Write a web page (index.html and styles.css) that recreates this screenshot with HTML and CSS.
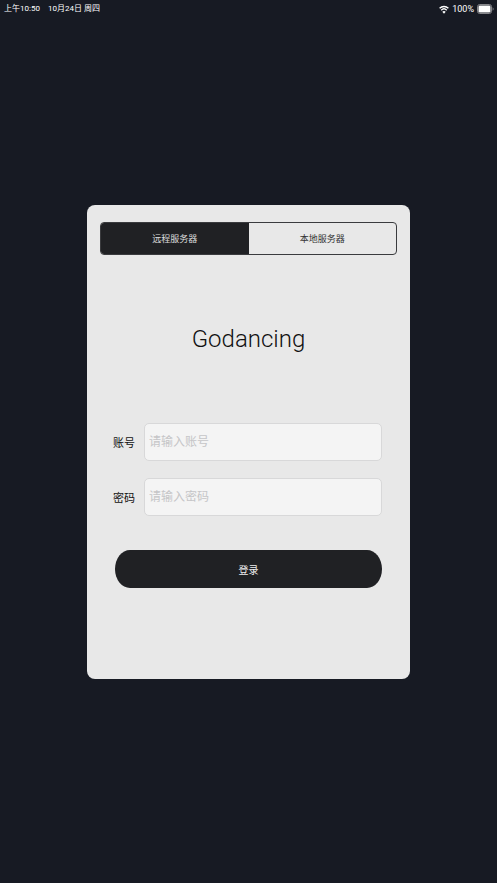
FILE: index.html
```html
<!DOCTYPE html>
<html lang="zh-CN">
<head>
    <meta charset="UTF-8">
    <meta name="viewport" content="width=device-width, initial-scale=1.0">
    <title>Godancing</title>
    <link rel="stylesheet" href="styles.css">
</head>
<body>

    <header class="status-bar">
        <span>上午10:50</span>
        <span>10月24日 周四</span>
        <div class="status-right">
            <svg class="wifi" viewBox="0 0 20 18" preserveAspectRatio="none" aria-hidden="true">
                <path d="M1.2 6.4a12.8 12.8 0 0 1 17.6 0M4.5 10.3a8 8 0 0 1 11 0" fill="none" stroke="#fff" stroke-width="2.8"/>
                <path d="M10 17.5l-3.4-3.9a5 5 0 0 1 6.8 0z" fill="#fff"/>
            </svg>
            <span>100%</span>
            <svg class="battery" viewBox="0 0 17 10" aria-hidden="true">
                <rect x=".5" y=".5" width="14" height="9" rx="2.2" fill="none" stroke="#85868a"/>
                <rect x="1.5" y="1.5" width="12" height="7" rx="1.3" fill="#fff"/>
                <path d="M15.6 3.3q1 .5 1 1.7t-1 1.7z" fill="#85868a"/>
            </svg>
        </div>
    </header>

    <main class="login-page">
        <section class="card">
            <div class="segment">
                <button type="button" class="segment-item active">远程服务器</button>
                <button type="button" class="segment-item">本地服务器</button>
            </div>

            <h1 class="title">Godancing</h1>

            <form class="login-form">
                <div class="field">
                    <label for="account">账号</label>
                    <input id="account" type="text" placeholder="请输入账号">
                </div>
                <div class="field">
                    <label for="password">密码</label>
                    <input id="password" type="password" placeholder="请输入密码">
                </div>
                <button type="button" class="login-button">登录</button>
            </form>
        </section>
    </main>

</body>
</html>
```

FILE: styles.css
```css
* {
    box-sizing: border-box;
}

body {
    display: flex;
    flex-direction: column;
    min-height: 100vh;
    margin: 0;
    background-color: #171a23;
    color: #111;
    font-family: Roboto, "Noto Sans CJK SC", sans-serif;
}

button,
input {
    font-family: inherit;
}

/* Status bar */
.status-bar {
    display: flex;
    align-items: center;
    gap: 8px;
    height: 18px;
    padding: 0 3px 0 4px;
    color: #fff;
    font-size: 8px;
    line-height: 18px;
}

.status-right {
    display: flex;
    align-items: center;
    gap: 3px;
    margin-left: auto;
    font-size: 9px;
}

.wifi {
    width: 10px;
    height: 9px;
}

.battery {
    width: 17px;
    height: 10px;
}

/* Login card */
.login-page {
    display: flex;
    flex: 1;
    align-items: center;
    justify-content: center;
    padding-bottom: 17px;
}

.card {
    width: 65%;
    padding: 17px 13px 91px;
    background-color: #e8e8e8;
    border-radius: 8px;
}

.segment {
    display: flex;
    height: 33px;
    overflow: hidden;
    border: 1px solid #3a3b3e;
    border-radius: 4px;
}

.segment-item {
    flex: 1;
    padding: 0;
    background-color: transparent;
    border: none;
    color: #333;
    font-size: 9px;
    cursor: pointer;
}

.segment-item.active {
    background-color: #202124;
    color: #ddd;
}

.title {
    margin: 64px 0;
    font-size: 24px;
    font-weight: 300;
    line-height: 40px;
    text-align: center;
}

.login-form {
    display: flex;
    flex-direction: column;
    gap: 17px;
    padding: 0 15px 0 13px;
}

.field {
    display: flex;
    align-items: center;
    gap: 9px;
}

.field label {
    flex: none;
    font-size: 11px;
}

.field input {
    flex: 1;
    min-width: 0;
    height: 38px;
    padding: 0 4px;
    background-color: #f4f4f4;
    border: 1px solid #d8d8d9;
    border-radius: 5px;
    font-size: 12px;
}

.field input::placeholder {
    color: #c5c5c7;
}

.login-button {
    height: 38px;
    margin: 17px 0 0 2px;
    padding: 0;
    background-color: #202124;
    border: none;
    border-radius: 15px / 19px;
    color: #eee;
    font-size: 10px;
    cursor: pointer;
}
```
